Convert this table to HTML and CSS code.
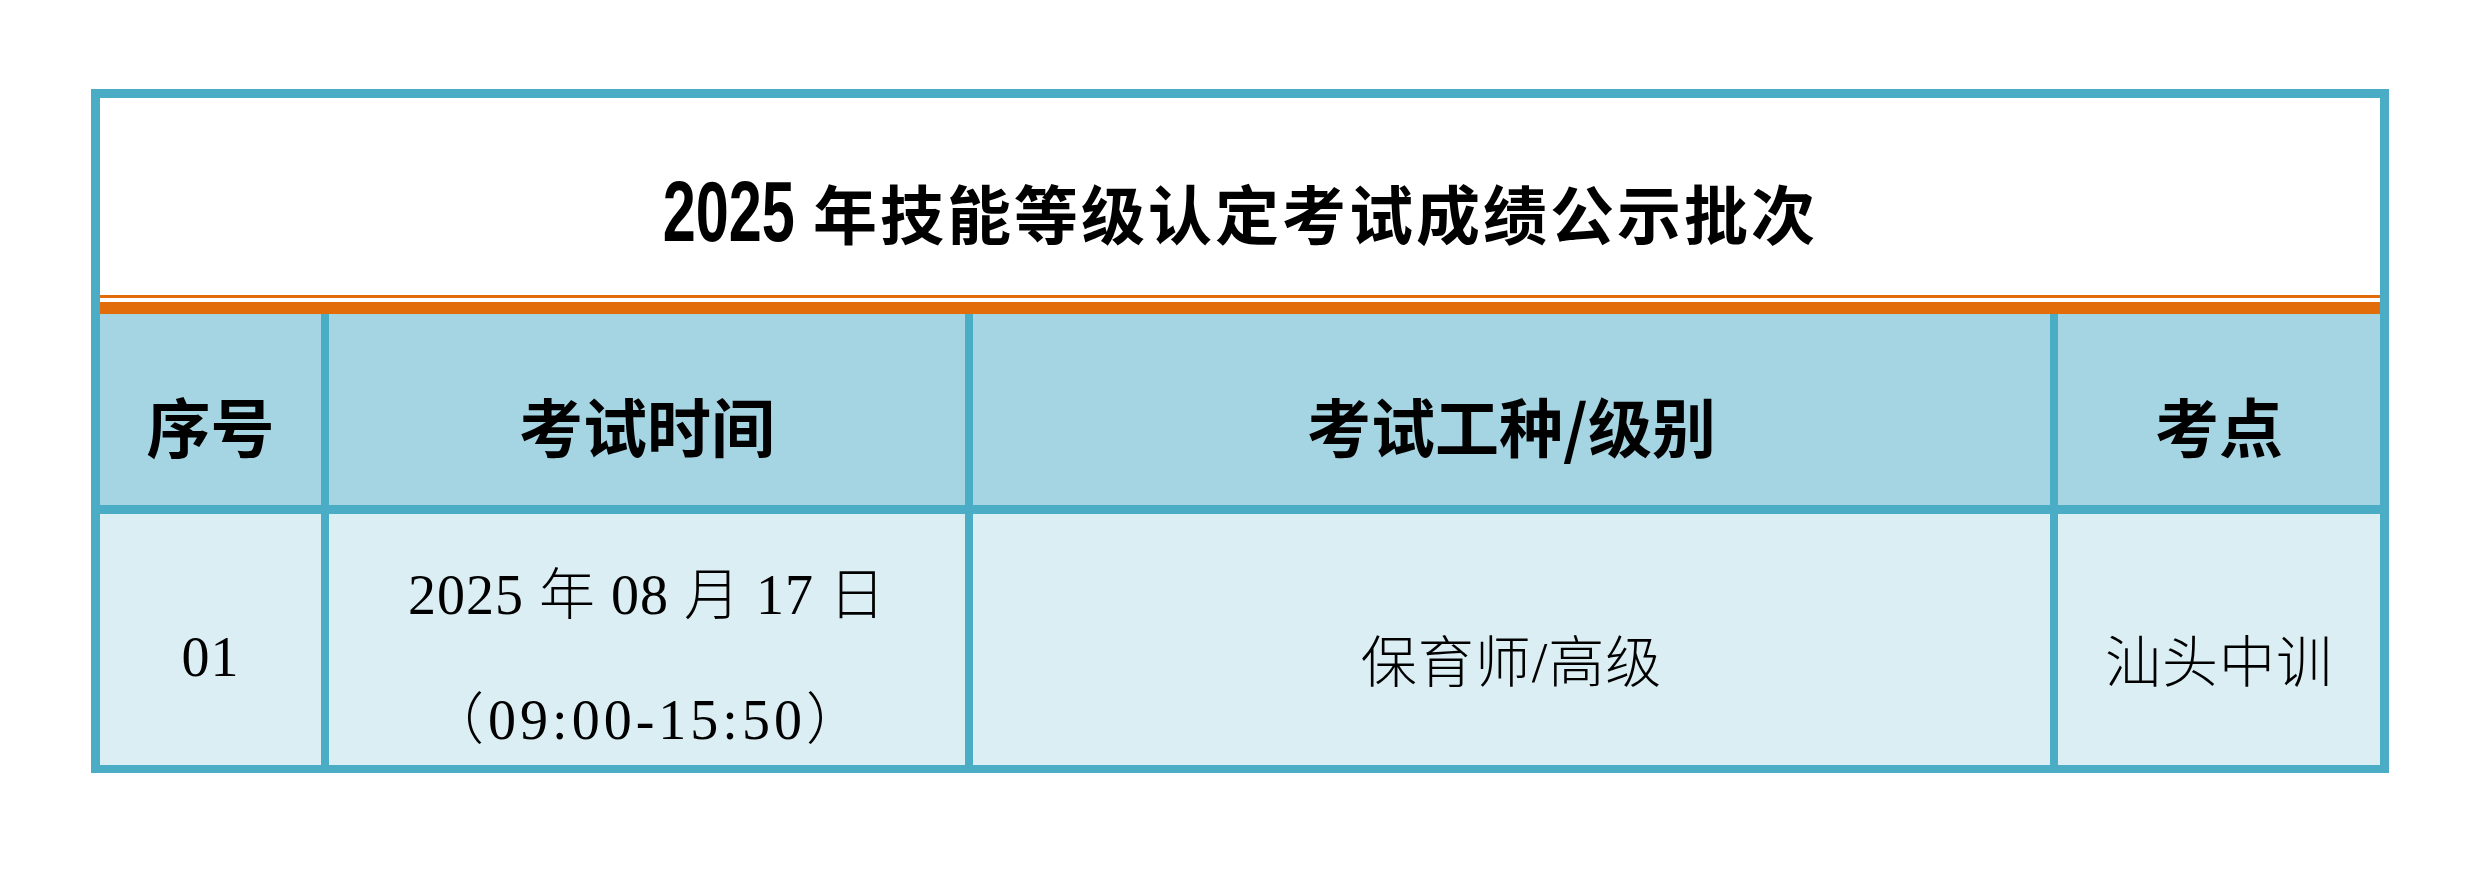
FILE: index.html
```html
<!DOCTYPE html>
<html lang="zh-CN">
<head>
<meta charset="utf-8">
<title>2025年技能等级认定考试成绩公示批次</title>
<link rel="stylesheet" href="styles.css">
</head>
<body>
<div class="sheet">
  <div class="title"><span class="num">2025</span> 年技能等级认定考试成绩公示批次</div>
  <div class="rule"></div>
  <div class="grid">
    <div class="cell head">序号</div>
    <div class="cell head">考试时间</div>
    <div class="cell head">考试工种/级别</div>
    <div class="cell head">考点</div>
    <div class="cell data">01</div>
    <div class="cell data two"><div>2025 年 08 月 17 日</div><div class="time">（09:00-15:50）</div></div>
    <div class="cell data">保育师/高级</div>
    <div class="cell data">汕头中训</div>
  </div>
</div>
</body>
</html>
```
FILE: styles.css
```css
html, body {
  margin: 0;
  background: #ffffff;
}
body {
  padding: 89px 91px 0;
}
.sheet {
  width: 2280px;
  border: 9px solid #4bacc6;
  border-bottom-width: 8px;
}
.title {
  height: 197px;
  box-sizing: border-box;
  padding-top: 29px;
  display: flex;
  align-items: center;
  justify-content: center;
  background: #ffffff;
  color: #000000;
  font: 700 64px "Noto Sans CJK SC", sans-serif;
  letter-spacing: 3px;
  white-space: pre;
}
.title .num {
  display: inline-block;
  font-family: "Liberation Sans", sans-serif;
  font-size: 86px;
  letter-spacing: 0;
  transform: scaleX(0.69);
  margin: 0 -29px;
}
.rule {
  height: 4px;
  background: #ffffff;
  border-top: 3px solid #e36c0a;
  border-bottom: 12px solid #e36c0a;
}
.grid {
  display: grid;
  grid-template-columns: 221px 636px 1077px 322px;
  grid-template-rows: 191px 251px;
  column-gap: 8px;
  row-gap: 9px;
  background: #4bacc6;
}
.cell {
  box-sizing: border-box;
  display: flex;
  align-items: center;
  justify-content: center;
  color: #000000;
  white-space: pre;
}
.head {
  background: #a5d5e2;
  padding-top: 29px;
  font: 700 64px "Noto Sans CJK SC", sans-serif;
}
.data {
  background: #daeef3;
  padding-top: 35px;
  font: 300 56px "Liberation Serif", "Noto Sans CJK SC", serif;
  letter-spacing: 1px;
}
.two {
  flex-direction: column;
  gap: 65px;
  line-height: 60px;
}
.two .time {
  letter-spacing: 4px;
}
```
